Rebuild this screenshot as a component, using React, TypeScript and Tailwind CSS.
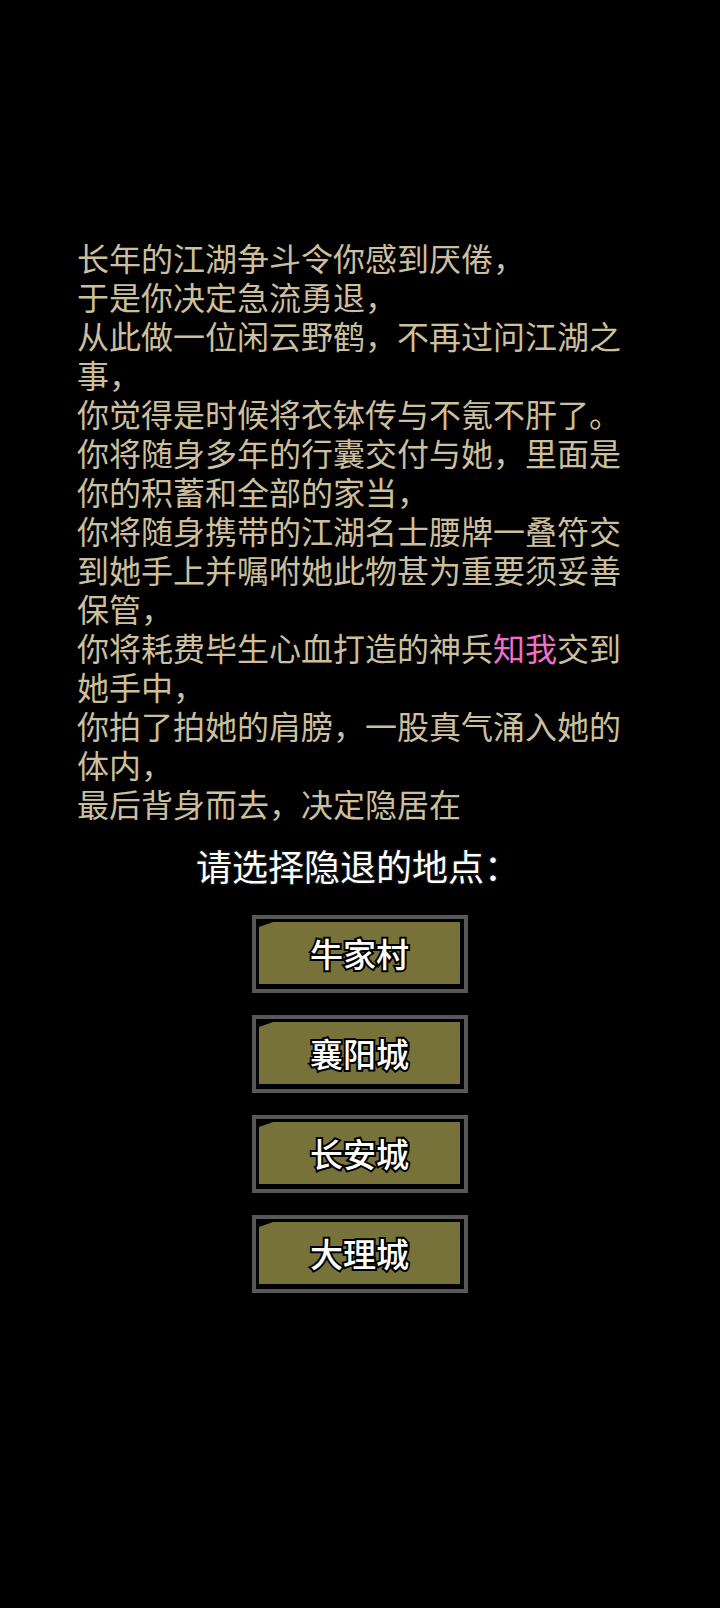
import React from 'react';

const places = ['牛家村', '襄阳城', '长安城', '大理城'];

const PlaceButton: React.FC<{ label: string }> = ({ label }) => (
  <button className="w-[216px] h-[78px] border-4 border-[#58585a] bg-black pt-[3px] pl-[3px] pr-[4px] pb-[5px] block">
    <div className="w-full h-full bg-[#76723a] [clip-path:polygon(0_5px,14px_0,100%_0,100%_100%,0_100%)] flex items-center justify-center">
      <span className="text-[33px] leading-none font-medium text-white [-webkit-text-stroke:4px_black] [paint-order:stroke_fill]">
        {label}
      </span>
    </div>
  </button>
);

export default function App() {
  return (
    <div className="w-[720px] min-h-[1608px] bg-black font-['Noto_Sans_CJK_SC','Noto_Sans',sans-serif] pt-[238px]">
      {/* story text */}
      <div className="ml-[77px] w-[560px] text-[32px] leading-[39px] text-[#cbbf9e]">
        <p>长年的江湖争斗令你感到厌倦，</p>
        <p>于是你决定急流勇退，</p>
        <p>从此做一位闲云野鹤，不再过问江湖之事，</p>
        <p>你觉得是时候将衣钵传与不氪不肝了。</p>
        <p>你将随身多年的行囊交付与她，里面是你的积蓄和全部的家当，</p>
        <p>你将随身携带的江湖名士腰牌一叠符交到她手上并嘱咐她此物甚为重要须妥善保管，</p>
        <p>
          你将耗费毕生心血打造的神兵<span className="text-[#f070c8]">知我</span>交到她手中，
        </p>
        <p>你拍了拍她的肩膀，一股真气涌入她的体内，</p>
        <p>最后背身而去，决定隐居在</p>
      </div>

      <div className="mt-[20px] flex justify-center">
        <h2 className="text-[36px] leading-[44px] text-white [-webkit-text-stroke:3px_#111] [paint-order:stroke_fill] ml-[-4px]">
          请选择隐退的地点：
        </h2>
      </div>

      <div className="mt-[28px] flex flex-col items-center gap-[22px]">
        {places.map((p) => (
          <PlaceButton key={p} label={p} />
        ))}
      </div>
    </div>
  );
}
